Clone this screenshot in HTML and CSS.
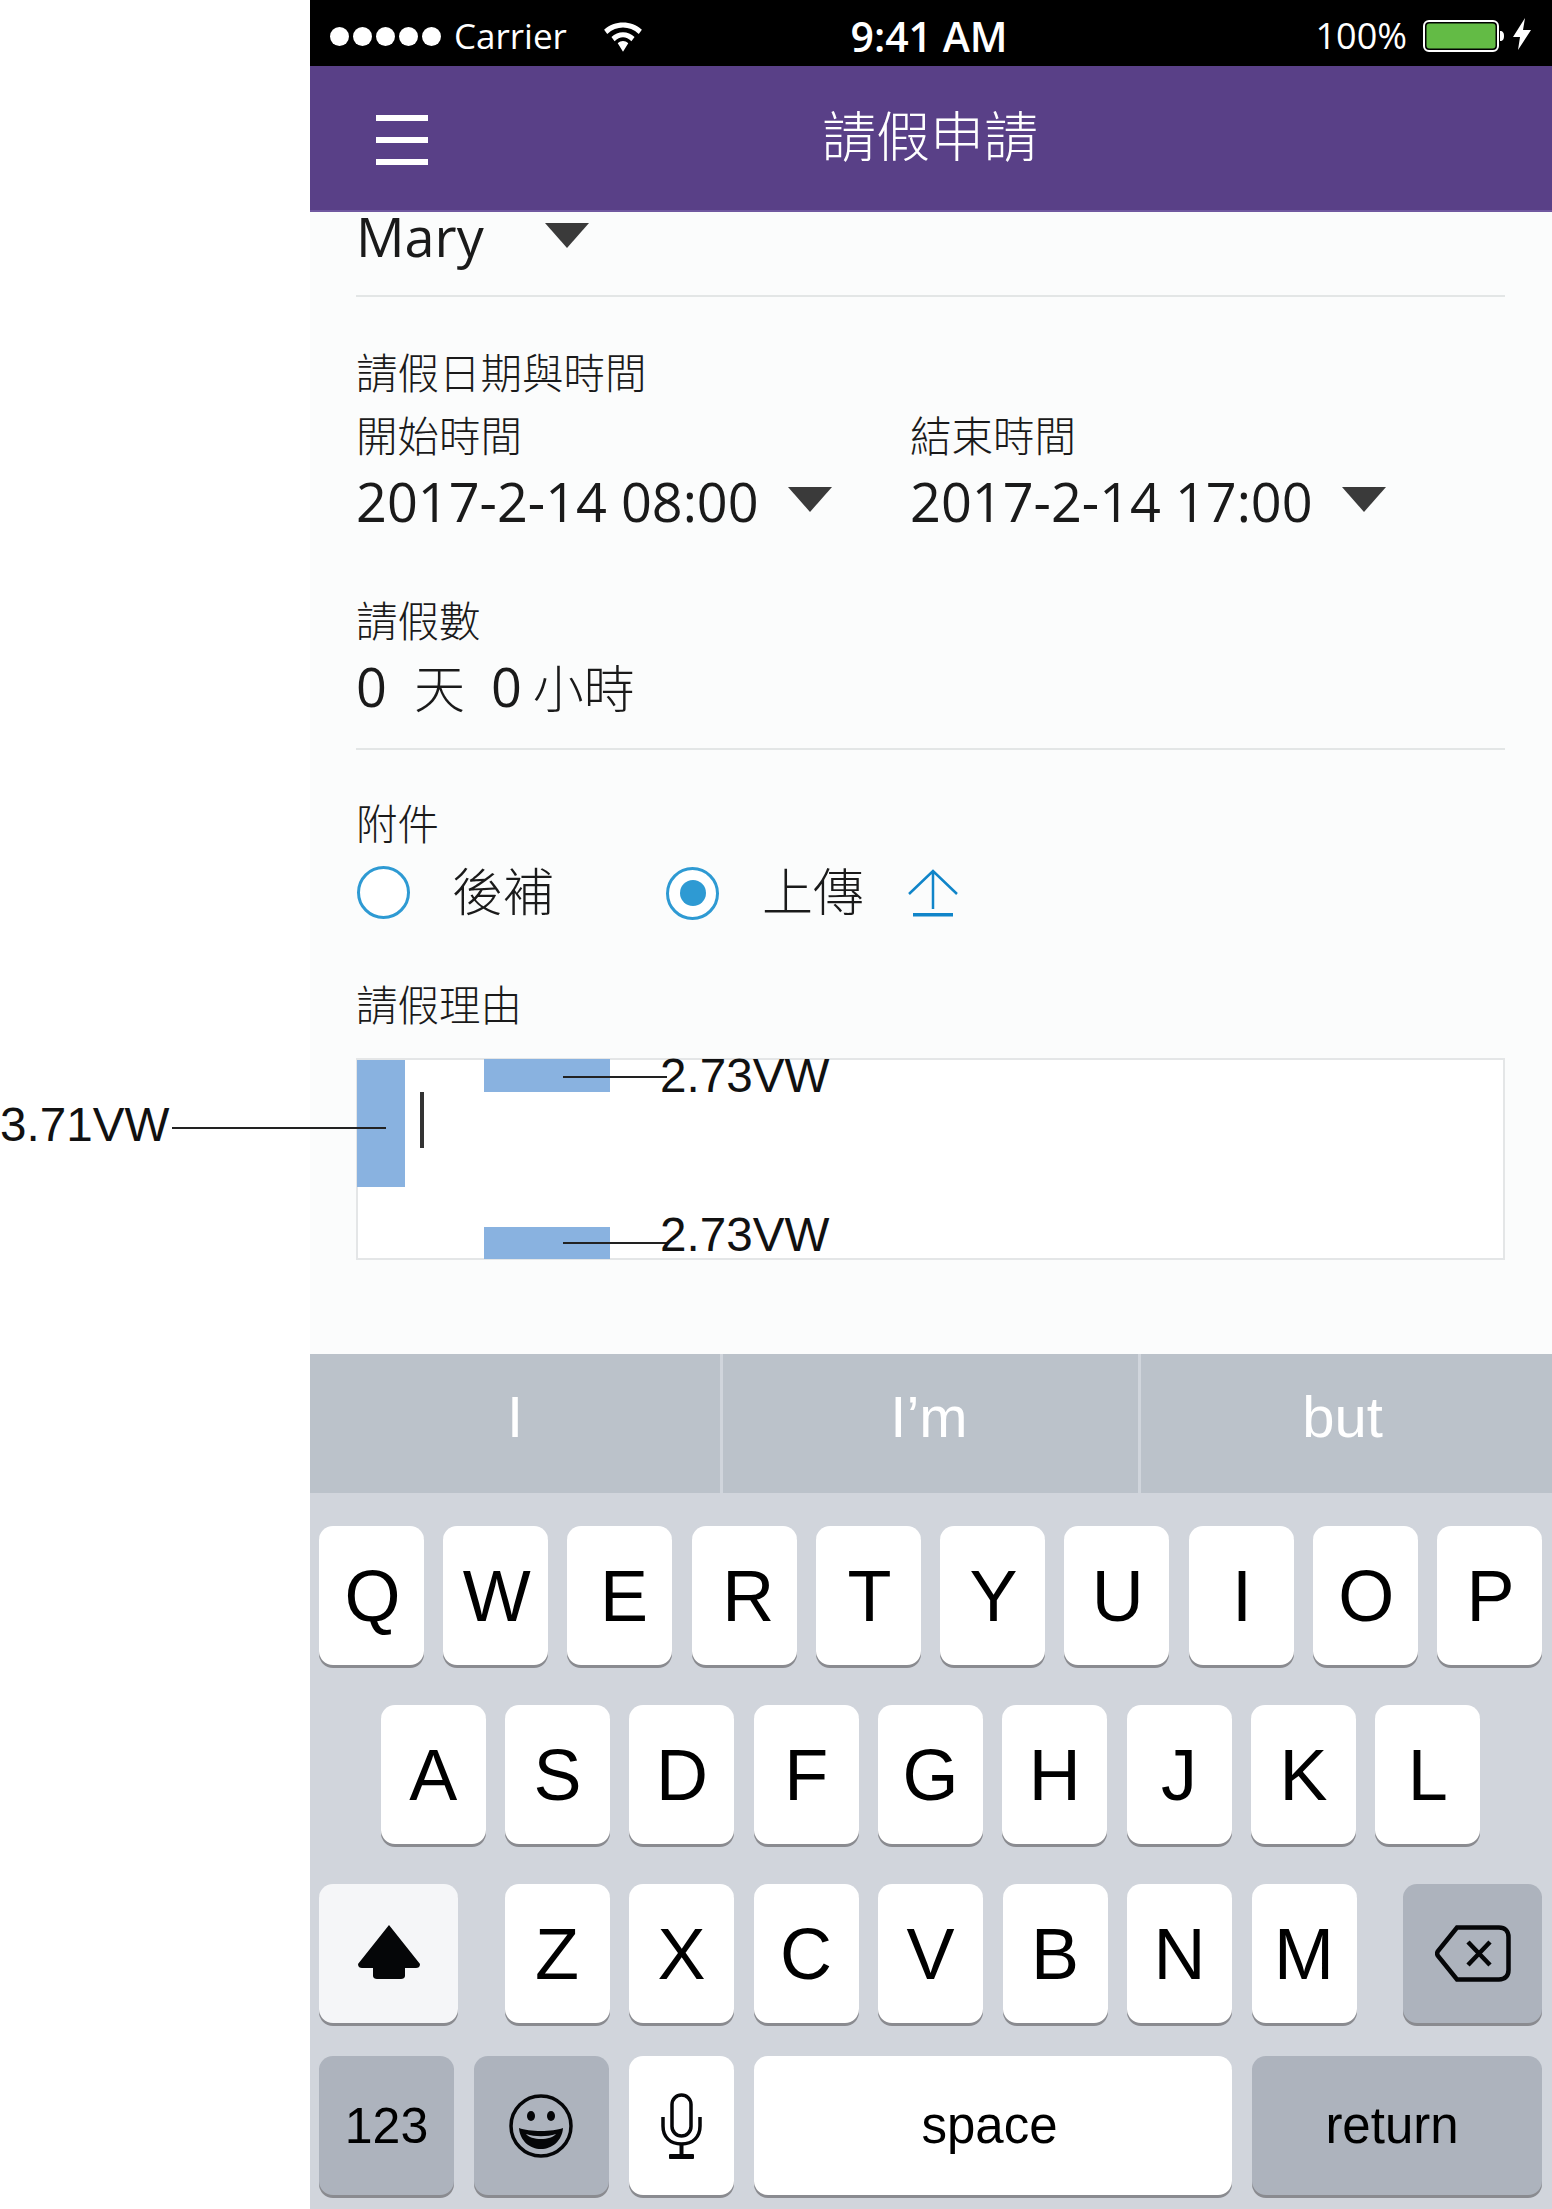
FILE: index.html
```html
<!DOCTYPE html>
<html lang="zh-Hant">
<head>
    <meta charset="UTF-8">
    <title>請假申請</title>
    <link rel="stylesheet" href="styles.css">
</head>

<body>
<div class="stage">
    <div class="phone">
        <!-- Status bar -->
        <div class="status">
            <div class="status-left">
                <span class="dots"><i></i><i></i><i></i><i></i><i></i></span>
                <span class="carrier">Carrier</span>
                <svg class="wifi" viewBox="0 0 40 30"><path d="M2 9C12 0 28 0 38 9L35 13C26 5 14 5 5 13Z M9 16C15 10 25 10 31 16L28 20C23 15 17 15 12 20Z M15 22C18 19 22 19 25 22L20 30Z" fill="#fff"/></svg>
            </div>
            <div class="clock">9:41 AM</div>
            <div class="status-right">
                <span class="percent">100%</span>
                <svg class="battery" viewBox="0 0 82 32"><rect x="1" y="1" width="74" height="30" rx="5" fill="none" stroke="#fff" stroke-width="2"/><rect x="3.500" y="3.500" width="69" height="25" rx="3" fill="#63bb45"/><path d="M77 11C80 11 81 13 81 16C81 19 80 21 77 21Z" fill="#fff"/></svg>
                <svg class="bolt" viewBox="0 0 18 32"><path d="M12 0L0 19H7L5 32L18 12H10Z" fill="#fff"/></svg>
            </div>
        </div>

        <!-- Nav bar -->
        <div class="nav">
            <div class="menu"><i></i><i></i><i></i></div>
            <div class="nav-title">請假申請</div>
        </div>

        <!-- Form -->
        <div class="content">
            <div class="name-row">
                <span class="value">Mary</span>
                <span class="caret"></span>
            </div>

            <div class="label first">請假日期與時間</div>
            <div class="date-grid">
                <div>
                    <div class="label">開始時間</div>
                    <div class="date-value"><span class="value">2017-2-14 08:00</span><span class="caret"></span></div>
                </div>
                <div>
                    <div class="label">結束時間</div>
                    <div class="date-value"><span class="value">2017-2-14 17:00</span><span class="caret"></span></div>
                </div>
            </div>

            <div class="label days-label">請假數</div>
            <div class="days"><span class="value">0</span><span class="cjk day-unit">天</span><span class="value">0</span><span class="cjk hour-unit">小時</span></div>

            <div class="label attach-label">附件</div>
            <div class="radios">
                <span class="radio"></span>
                <span class="cjk radio-text">後補</span>
                <span class="radio checked"></span>
                <span class="cjk radio-text">上傳</span>
                <svg class="upload" viewBox="0 0 50 48"><path d="M1 25L25 2L49 25M25 2V40" fill="none" stroke="#1085c9" stroke-width="2.500"/><rect x="5" y="44" width="40" height="3.500" fill="#1085c9"/></svg>
            </div>

            <div class="label reason-label">請假理由</div>
            <div class="reason-box"><span class="text-cursor"></span></div>
        </div>

        <!-- Keyboard -->
        <div class="suggestions">
            <div>I</div>
            <div>I’m</div>
            <div>but</div>
        </div>
        <div class="keyboard">
            <div class="key-row row-one">
                <div class="key">Q</div><div class="key">W</div><div class="key">E</div><div class="key">R</div><div class="key">T</div><div class="key">Y</div><div class="key">U</div><div class="key">I</div><div class="key">O</div><div class="key">P</div>
            </div>
            <div class="key-row row-two">
                <div class="key">A</div><div class="key">S</div><div class="key">D</div><div class="key">F</div><div class="key">G</div><div class="key">H</div><div class="key">J</div><div class="key">K</div><div class="key">L</div>
            </div>
            <div class="key-row row-three">
                <div class="key shift">
                    <svg class="shift-icon" viewBox="0 0 62 54"><path d="M31 0L62 39C62 42 60 43 58 43H47V51C47 53 45 54 43 54H19C17 54 15 53 15 51V43H4C2 43 0 42 0 39Z" fill="#050608"/></svg>
                </div>
                <div class="letters">
                    <div class="key">Z</div><div class="key">X</div><div class="key">C</div><div class="key">V</div><div class="key">B</div><div class="key">N</div><div class="key">M</div>
                </div>
                <div class="key dark delete">
                    <svg class="delete-icon" viewBox="0 0 76 57"><path d="M22 2.500H64C70 2.500 73.500 6 73.500 12V45C73.500 51 70 54.500 64 54.500H22L3 31C2 29.500 2 27.500 3 26Z" fill="none" stroke="#050608" stroke-width="4.500"/><path d="M33 17L55 40M55 17L33 40" stroke="#050608" stroke-width="4.500"/></svg>
                </div>
            </div>
            <div class="key-row row-four">
                <div class="key dark num">123</div>
                <div class="key dark emoji">
                    <svg class="emoji-icon" viewBox="0 0 64 64"><circle cx="32" cy="32" r="30" fill="none" stroke="#050608" stroke-width="3.500"/><ellipse cx="22" cy="22" rx="4" ry="5" fill="#050608"/><ellipse cx="42" cy="22" rx="4" ry="5" fill="#050608"/><path d="M10 34C20 38 44 38 54 34C53 47 43 55 32 55C21 55 11 47 10 34Z" fill="#050608"/><path d="M17 40C26 43 38 43 47 40C45 43 38 45 32 45C26 45 19 43 17 40Z" fill="#adb3bd"/></svg>
                </div>
                <div class="key mic">
                    <svg class="mic-icon" viewBox="0 0 41 66"><rect x="11" y="2" width="19" height="41" rx="9.500" fill="none" stroke="#050608" stroke-width="3.500"/><path d="M2 24V33C2 44 9 51 20.500 51C32 51 39 44 39 33V24" fill="none" stroke="#050608" stroke-width="3.500"/><path d="M20.500 51V62" stroke="#050608" stroke-width="4"/><rect x="8" y="61" width="25" height="5" rx="1" fill="#050608"/></svg>
                </div>
                <div class="key space">space</div>
                <div class="key dark return">return</div>
            </div>
        </div>
    </div>

    <!-- Measurement marks laid over the design -->
    <div class="mark mark-side"></div>
    <div class="mark mark-top"></div>
    <div class="mark mark-bottom"></div>
    <div class="mark-line line-side"></div>
    <div class="mark-line line-top"></div>
    <div class="mark-line line-bottom"></div>
    <div class="mark-text text-side">3.71VW</div>
    <div class="mark-text text-top">2.73VW</div>
    <div class="mark-text text-bottom">2.73VW</div>
</div>
</body>
</html>
```

FILE: styles.css
```css
* {
    margin: 0;
    padding: 0;
    box-sizing: border-box;
}
body {
    background: #fff;
    font-family: "Open Sans", "Noto Sans CJK TC", sans-serif;
    color: #1a1a1a;
}
.stage {
    position: relative;
    width: 1552px;
    height: 2209px;
    overflow: hidden;
}
.phone {
    margin-left: 310px;
    width: 1242px;
}

/* status bar */
.status {
    height: 66px;
    background: #000;
    color: #fff;
    display: grid;
    grid-template-columns: 1fr auto 1fr;
    align-items: center;
    padding: 6px 20px 0;
}
.status-left,
.status-right {
    display: flex;
    align-items: center;
}
.status-right {
    justify-content: flex-end;
}
.dots {
    display: flex;
    gap: 4px;
    margin-right: 13px;
}
.dots i {
    width: 19px;
    height: 19px;
    border-radius: 50%;
    background: #fff;
}
.carrier {
    font-size: 35px;
    line-height: 40px;
}
.wifi {
    width: 42px;
    height: 32px;
    margin-left: 35px;
}
.clock {
    font-size: 41px;
    line-height: 44px;
    font-weight: 600;
    margin-left: -4px;
}
.percent {
    font-size: 36px;
    line-height: 44px;
}
.battery {
    width: 82px;
    height: 32px;
    margin-left: 16px;
}
.bolt {
    width: 20px;
    height: 32px;
    margin-left: 7px;
    margin-top: -4px;
}

/* nav bar */
.nav {
    height: 146px;
    background: #594087;
    border-bottom: 2px solid #7058a0;
    display: grid;
    grid-template-columns: 1fr auto 1fr;
    align-items: center;
    padding-left: 66px;
    padding-right: 66px;
}
.menu {
    width: 52px;
    display: flex;
    flex-direction: column;
    gap: 16px;
    margin-top: 4px;
}
.menu i {
    display: block;
    height: 6px;
    background: #fff;
}
.nav-title {
    font-family: "Noto Sans CJK TC", sans-serif;
    font-weight: 300;
    font-size: 54px;
    line-height: 60px;
    color: #fff;
    margin-top: -8px;
    margin-left: -2px;
}

/* form */
.content {
    height: 1142px;
    background: #fbfcfc;
    padding: 0 47px 0 46px;
}
.value {
    font-size: 54px;
    line-height: 60px;
    color: #1a1a1a;
}
.cjk {
    font-family: "Noto Sans CJK TC", sans-serif;
    font-weight: 300;
    font-size: 51px;
    line-height: 60px;
}
.label {
    font-family: "Noto Sans CJK TC", sans-serif;
    font-weight: 300;
    font-size: 41.500px;
    line-height: 56px;
    color: #1a1a1a;
}
.caret {
    display: block;
    width: 0;
    height: 0;
    border-left: 22px solid transparent;
    border-right: 22px solid transparent;
    border-top: 25px solid #3a3a3a;
}
.name-row {
    height: 85px;
    border-bottom: 2px solid #e3e6e6;
    display: flex;
    align-items: flex-start;
}
.name-row .value {
    line-height: 48px;
}
.name-row .caret {
    margin-left: 61px;
    margin-top: 11px;
}
.label.first {
    margin-top: 46px;
}
.date-grid {
    display: grid;
    grid-template-columns: 554px 1fr;
    margin-top: 7px;
}
.date-value {
    display: flex;
    align-items: center;
    margin-top: 9px;
}
.date-value .caret {
    margin-left: 29px;
    margin-top: -4px;
}
.days-label {
    margin-top: 60px;
}
.days {
    display: flex;
    align-items: center;
    height: 93px;
    padding-bottom: 33px;
    margin-top: 10px;
    border-bottom: 2px solid #e3e6e6;
}
.day-unit {
    margin-left: 27px;
    margin-right: 26px;
}
.hour-unit {
    margin-left: 11px;
}
.attach-label {
    margin-top: 44px;
}
.radios {
    display: flex;
    align-items: center;
    height: 60px;
    margin-top: 12px;
}
.radio {
    display: flex;
    align-items: center;
    justify-content: center;
    width: 53px;
    height: 53px;
    border-radius: 50%;
    border: 3px solid #2e9ad3;
    background: #fff;
    margin-left: 1px;
}
.radio.checked {
    margin-top: 2px;
}
.radio.checked::after {
    content: "";
    width: 26px;
    height: 26px;
    border-radius: 50%;
    background: #2e9ad3;
}
.radio-text {
    margin-left: 42px;
    margin-right: 111px;
    margin-top: -6px;
}
.radio-text:nth-of-type(4) {
    margin-left: 43px;
    margin-right: 0;
}
.upload {
    width: 50px;
    height: 48px;
    margin-left: 44px;
    margin-top: 2px;
}
.reason-label {
    margin-top: 53px;
}
.reason-box {
    height: 202px;
    margin-top: 27px;
    background: #fff;
    border: 2px solid #e4e6e7;
    padding: 32px 0 0 62px;
}
.text-cursor {
    display: block;
    width: 4px;
    height: 56px;
    background: #333;
}

/* keyboard */
.suggestions {
    height: 139px;
    background: #bbc2ca;
    display: grid;
    grid-template-columns: 413px 418px 1fr;
    color: #fff;
    font-family: "Liberation Sans", sans-serif;
    font-size: 58px;
}
.suggestions div {
    display: flex;
    align-items: center;
    justify-content: center;
    border-right: 3px solid #d0d5dc;
    padding-bottom: 14px;
}
.suggestions div:nth-child(2) {
    padding-right: 3px;
}
.suggestions div:last-child {
    border-right: none;
    padding-right: 8px;
}
.keyboard {
    height: 716px;
    background: #d1d5dc;
    padding: 33px 10px 0 9px;
    font-family: "Liberation Sans", sans-serif;
}
.key-row {
    display: flex;
    justify-content: space-between;
}
.row-one {
    margin-bottom: 40px;
}
.row-one .key {
    padding-left: 2px;
}
.row-one .key:nth-child(3),
.row-one .key:nth-child(4) {
    padding-left: 8px;
}
.row-two {
    justify-content: center;
    gap: 19.300px;
    margin-bottom: 40px;
}
.row-two .key {
    padding-top: 1px;
}
.row-three {
    margin-bottom: 33px;
}
.letters {
    display: flex;
    gap: 19.500px;
}
.row-four {
    gap: 20px;
}
.key {
    width: 105px;
    height: 139px;
    background: #fff;
    border-radius: 14px;
    box-shadow: 0 3px 0 #8a8b90;
    display: flex;
    align-items: center;
    justify-content: center;
    font-size: 72px;
    color: #000;
}
.key.dark {
    background: #adb3bd;
}
.key.shift {
    width: 139px;
    background: #f5f6f8;
}
.key.delete {
    width: 139px;
}
.shift-icon {
    width: 62px;
    height: 54px;
    margin-top: -3px;
}
.delete-icon {
    width: 76px;
    height: 57px;
}
.key.num {
    width: 135px;
    font-size: 50px;
}
.key.emoji {
    width: 135px;
}
.emoji-icon {
    width: 64px;
    height: 64px;
    margin-left: -2px;
}
.mic-icon {
    width: 41px;
    height: 66px;
}
.key.space {
    width: 478px;
    font-size: 51px;
    padding-right: 7px;
}
.key.return {
    width: 290px;
    font-size: 51px;
    padding-right: 10px;
}

/* measurement marks */
.mark {
    position: absolute;
    background: #89b2e0;
}
.mark-side {
    left: 357px;
    top: 1060px;
    width: 48px;
    height: 127px;
}
.mark-top {
    left: 484px;
    top: 1059px;
    width: 126px;
    height: 33px;
}
.mark-bottom {
    left: 484px;
    top: 1227px;
    width: 126px;
    height: 32px;
}
.mark-line {
    position: absolute;
    height: 2px;
    background: #222;
}
.line-side {
    left: 172px;
    top: 1127px;
    width: 214px;
}
.line-top {
    left: 563px;
    top: 1076px;
    width: 104px;
}
.line-bottom {
    left: 563px;
    top: 1242px;
    width: 104px;
}
.mark-text {
    position: absolute;
    font-family: "Liberation Sans", sans-serif;
    font-size: 47.600px;
    line-height: 54px;
    color: #111;
}
.text-side {
    left: 0;
    top: 1098px;
}
.text-top {
    left: 660px;
    top: 1049px;
}
.text-bottom {
    left: 660px;
    top: 1208px;
}
```
